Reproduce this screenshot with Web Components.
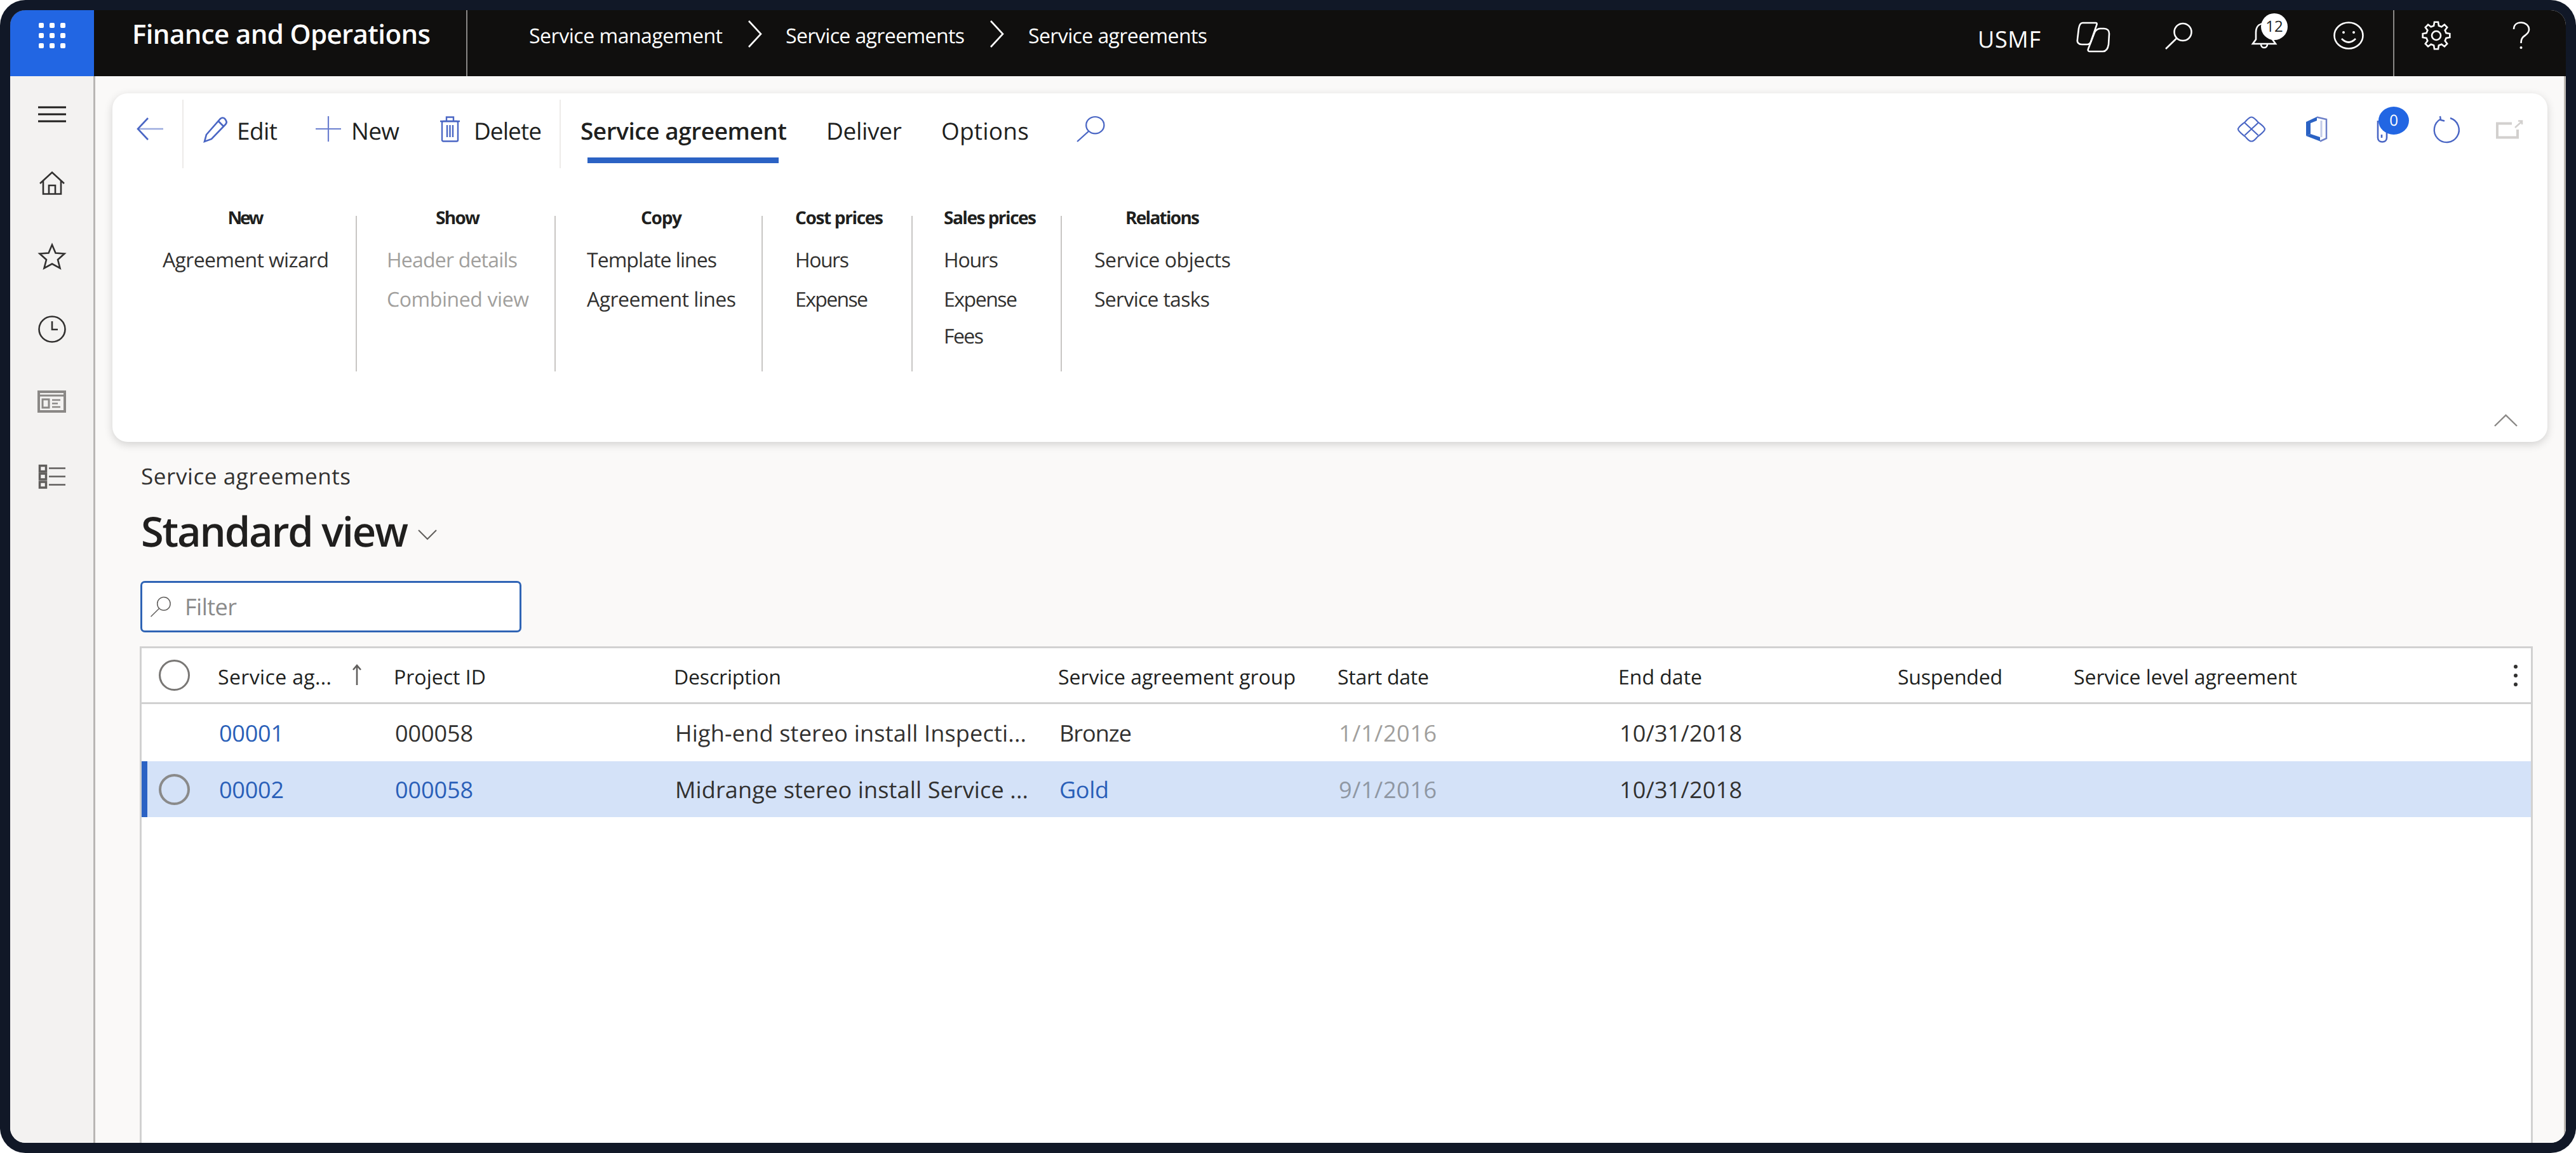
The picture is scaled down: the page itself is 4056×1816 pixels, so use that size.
<!DOCTYPE html>
<html lang="en"><head><meta charset="utf-8"><title>Service agreements</title>
<style>
html,body{margin:0;padding:0;background:#fff}
body{width:4056px;height:1816px;overflow:hidden;font-family:"Open Sans","Noto Sans",sans-serif;text-rendering:geometricPrecision;color:#201f1e}
</style></head>
<body>
<app-frame>
  <top-bar slot="top"></top-bar>
  <side-nav slot="side"></side-nav>
  <main-area slot="main">
    <action-pane></action-pane>
    <page-heading></page-heading>
    <filter-box></filter-box>
    <data-grid>
      <grid-row head>
        <grid-cell><ui-radio></ui-radio></grid-cell>
        <grid-cell head><fit-text w="179">Service ag...</fit-text><ui-icon name="sortup" w="14" h="33" style="margin:-7px 0 0 33px;color:#605e5c"></ui-icon></grid-cell>
        <grid-cell head><fit-text w="145">Project ID</fit-text></grid-cell>
        <grid-cell head><fit-text w="169">Description</fit-text></grid-cell>
        <grid-cell head><fit-text w="374">Service agreement group</fit-text></grid-cell>
        <grid-cell head><fit-text w="144">Start date</fit-text></grid-cell>
        <grid-cell head><fit-text w="132">End date</fit-text></grid-cell>
        <grid-cell head><fit-text w="165">Suspended</fit-text></grid-cell>
        <grid-cell head><fit-text w="352">Service level agreement</fit-text><ui-icon name="more" w="8" h="36" style="margin:-4px 0 0 340px;color:#323130"></ui-icon></grid-cell>
      </grid-row>
      <grid-row style="height:90px">
        <grid-cell></grid-cell>
        <grid-cell link><fit-text w="102">00001</fit-text></grid-cell>
        <grid-cell><fit-text w="123">000058</fit-text></grid-cell>
        <grid-cell><fit-text w="553">High-end stereo install Inspecti...</fit-text></grid-cell>
        <grid-cell><fit-text w="114">Bronze</fit-text></grid-cell>
        <grid-cell dim><fit-text w="154">1/1/2016</fit-text></grid-cell>
        <grid-cell><fit-text w="193">10/31/2018</fit-text></grid-cell>
        <grid-cell></grid-cell><grid-cell></grid-cell>
      </grid-row>
      <grid-row selected style="height:88px">
        <grid-cell><ui-radio thick></ui-radio></grid-cell>
        <grid-cell link><fit-text w="102">00002</fit-text></grid-cell>
        <grid-cell link><fit-text w="123">000058</fit-text></grid-cell>
        <grid-cell><fit-text w="556">Midrange stereo install Service ...</fit-text></grid-cell>
        <grid-cell link><fit-text w="78">Gold</fit-text></grid-cell>
        <grid-cell dim><fit-text w="154">9/1/2016</fit-text></grid-cell>
        <grid-cell><fit-text w="193">10/31/2018</fit-text></grid-cell>
        <grid-cell></grid-cell><grid-cell></grid-cell>
      </grid-row>
    </data-grid>
  </main-area>
</app-frame>
<script>
const gear=(()=>{const cx=23,cy=22,N=8,R=21.5,r=16;let d='';for(let i=0;i<N;i++){const a=i*2*Math.PI/N-Math.PI/2,s=Math.PI/N;
 const pts=[[r,a-s*.62],[R,a-s*.36],[R,a+s*.36],[r,a+s*.62]];
 pts.forEach((p,j)=>{d+=(i===0&&j===0?'M':'L')+(cx+p[0]*Math.cos(p[1])).toFixed(1)+' '+(cy+p[0]*Math.sin(p[1])).toFixed(1)+' '});}
 return d+'Z';})();
const ICONS={
 waffle:[42,40,[0,1,2].map(r=>[0,1,2].map(c=>`<rect x="${c*17}" y="${r*16}" width="8" height="8" rx="2" fill="currentColor" stroke="none"/>`).join('')).join('')],
 copilot:[53,50,'<path d="M10 3H31C33 3 33 5 32 7L23 33C22 36 20 37 17 37H9C4 37 1 34 2 29L4 12C5 6 7 3 10 3Z"/><path d="M38 12H44C49 12 52 15 52 20L51 37C50 43 47 48 42 48H21C19 48 18 46 19 44L29 18C30 15 34 12 38 12Z"/>'],
 search:[45,43,'<circle cx="29" cy="15.500" r="13.500"/><path d="M19.500 25L2 42"/>'],
 bell:[42,42,'<path d="M21 2C12 2 8 8 8 16V27L3 34H39L34 27V16C34 8 30 2 21 2Z"/><path d="M16 35A5 5 0 0 0 26 35"/>'],
 smile:[48,44,'<ellipse cx="24" cy="22" rx="22.500" ry="20.500"/><circle cx="16" cy="17" r="2" fill="currentColor" stroke="none"/><circle cx="32" cy="17" r="2" fill="currentColor" stroke="none"/><path d="M13 27Q24 38 35 27"/>'],
 gear:[46,44,`<path d="${gear}"/><circle cx="23" cy="22" r="7"/>`],
 help:[29,44,'<path d="M3 12C3 5 8 1.500 14.500 1.500C21 1.500 27 6 27 12.500C27 19 21 21 17.500 24.500C15 27 14.500 29 14.500 34"/><circle cx="14.500" cy="41" r="2" fill="currentColor" stroke="none"/>'],
 crumb:[23,43,'<path d="M2 1L21 21.500L2 42"/>'],
 burger:[44,26,'<path d="M0 2H44M0 13H44M0 24H44"/>'],
 home:[40,37,'<path d="M1 19L20 1.500L39 19"/><path d="M6 15V35.500H34V15"/><path d="M15 35.500V22H25V35.500"/>'],
 star:[42,41,'<path d="M21 2.500L26.500 15.500L40.500 16.500L30 26L33.500 39.500L21 32.500L8.500 39.500L12 26L1.500 16.500L15.500 15.500Z"/>'],
 clock:[44,43,'<ellipse cx="22" cy="21.500" rx="20.500" ry="20"/><path d="M22 9V22H31"/>'],
 workspace:[45,35,'<rect x="2" y="2" width="41" height="31" stroke-width="4"/><path d="M2 8H43" stroke-width="3"/><rect x="8" y="14" width="10" height="13" stroke-width="3"/><path d="M23 15H36M23 20.500H32M23 26H36" stroke-width="2.500"/>'],
 tasklist:[42,37,'<rect x="1.500" y="1.500" width="10" height="9" stroke-width="3.500"/><rect x="1.500" y="14" width="10" height="9" stroke-width="3.500"/><rect x="1.500" y="27" width="10" height="9" stroke-width="3.500"/><path d="M16 5.500H42M16 18.500H42M16 31.500H42"/>'],
 back:[43,36,'<path d="M18 1L2 18L18 35"/><path d="M2 18H42" opacity=".55"/>'],
 edit:[43,42,'<path d="M8 30L30 5C32 3 35 3 37 5L39 8C40 10 40 12 38 14L16 37L5 41Z"/><path d="M27 9L35 17"/>'],
 plus:[42,42,'<path d="M21 1V41M1 21H41"/>'],
 trash:[33,42,'<rect x="4" y="9" width="25" height="31.500" rx="2"/><path d="M1 9H32M11 9V2.500H22V9M12 15V34M16.500 15V34M21 15V34"/>'],
 diamond:[44,41,'<path d="M22 1.500C26 1.500 28 5 32 9C38 14 43 17 43 20.500C43 24 38 27 32 32C28 36 26 39.500 22 39.500C18 39.500 16 36 12 32C6 27 1 24 1 20.500C1 17 6 14 12 9C16 5 18 1.500 22 1.500Z"/><path d="M11.500 10.500L32.500 30M32.500 10.500L11.500 30"/>'],
 office:[35,40,'<path fill="currentColor" stroke="none" d="M1 9L18 1V7L8 11V28L1 31Z"/><path fill="currentColor" stroke="none" d="M1 31L8 28L23 33V39.500Z"/><path d="M18 1.500L33 5V35L23 39.500" stroke="#6d80c8" stroke-width="2.500"/><path d="M25 7V33" stroke="#c3cbe8" stroke-width="3"/>'],
 clip:[18,43,'<path d="M2 8V35C2 39 5 41.500 9 41.500C13 41.500 16 39 16 35V20"/><path d="M8 30V35"/>'],
 refresh:[42,41,'<path d="M27 3A19.500 19.500 0 1 1 12 4.500"/><path d="M11 0L12 6L18 7.500"/>'],
 popout:[42,31,'<path d="M25 6.500H2V28.500H34V16" stroke-width="4"/><path d="M30 13L40 4M35 2.500H41V8" stroke-width="2.500"/>'],
 chevdown:[30,16,'<path d="M1 1L15 15L29 1"/>'],
 chevup:[37,19,'<path d="M1 18L18.500 1L36 18"/>'],
 sortup:[14,33,'<path d="M7 33V2M1 9L7 2L13 9"/>'],
 more:[8,36,'<circle cx="4" cy="4" r="3" fill="currentColor" stroke="none"/><circle cx="4" cy="18" r="3" fill="currentColor" stroke="none"/><circle cx="4" cy="32" r="3" fill="currentColor" stroke="none"/>']
};
class UiIcon extends HTMLElement{constructor(){super();this.attachShadow({mode:'open'})}
 connectedCallback(){const [vw,vh,body]=ICONS[this.getAttribute('name')];const w=this.getAttribute('w')||vw,h=this.getAttribute('h')||vh,sw=this.getAttribute('sw')||2.6;
  this.shadowRoot.innerHTML=`<style>:host{display:inline-flex;flex:none;width:${w}px;height:${h}px;line-height:0}svg{width:100%;height:100%;overflow:visible;fill:none;stroke:currentColor;stroke-width:${sw}}</style><svg viewBox="0 0 ${vw} ${vh}" preserveAspectRatio="none" aria-hidden="true">${body}</svg>`;}}
class FitText extends HTMLElement{constructor(){super();this.attachShadow({mode:'open'}).innerHTML='<style>:host{display:inline-block;flex:none;white-space:nowrap}</style><slot></slot>'}
 fit(){const w=+this.getAttribute('w');if(!w)return;this.style.letterSpacing='0';const m=this.getBoundingClientRect().width,n=this.textContent.length;if(!m||n<2)return;const ls=(w-m)/(n-1);this.style.letterSpacing=ls.toFixed(3)+'px';this.style.marginRight=(-ls).toFixed(3)+'px';}}
class AppFrame extends HTMLElement{constructor(){super();this.attachShadow({mode:'open'}).innerHTML=`<style>
 :host{display:block;width:4056px;height:1816px;box-sizing:border-box;padding:16px;background:#111827;border-radius:40px}
 .app{display:grid;grid-template-columns:134px 1fr;grid-template-rows:104px 1fr;height:1784px;border-radius:24px;overflow:hidden;background:#faf9f8}
 .t{grid-column:1/3;display:flex}.s{display:flex}.m{display:flex;min-width:0;min-height:0}
 ::slotted(*){flex:1;min-width:0}
 </style><div class="app"><div class="t"><slot name="top"></slot></div><div class="s"><slot name="side"></slot></div><div class="m"><slot name="main"></slot></div></div>`}}
class TopBar extends HTMLElement{constructor(){super();this.attachShadow({mode:'open'}).innerHTML=`<style>
 :host{display:flex;align-items:stretch;height:104px;background:#100f0e;color:#fff;font-size:32px}
 .waffle{box-sizing:border-box;width:132px;padding-bottom:24px;background:#2266e3;display:flex;align-items:center;justify-content:center;flex:none}
 .title{display:flex;align-items:center;box-sizing:border-box;padding-bottom:30px;font-size:42px;font-weight:600;margin-left:60px;width:526px;flex:none}
 .rule{width:2px;height:104px;background:#8a8886;flex:none}
 .crumbs{display:flex;align-items:center;box-sizing:border-box;padding-bottom:24px;margin-left:97px}
 .crumbs ui-icon{margin-bottom:5px}
 .right{margin-left:auto;display:flex;align-items:center;box-sizing:border-box;padding:0 56px 24px 0}
 .right .rule{align-self:flex-start}
 .usmf{font-size:36px;margin-top:10px}
 .bell{position:relative;width:57px;height:42px;flex:none}
 .badge{position:absolute;left:16px;top:-14px;width:42px;height:42px;border-radius:50%;background:#fff;color:#201f1e;font-size:24px;line-height:42px;text-align:center}
 ui-icon{color:#fff}
 </style>
 <div class="waffle"><ui-icon name="waffle"></ui-icon></div>
 <div class="title"><fit-text w="470">Finance and Operations</fit-text></div>
 <div class="rule"></div>
 <nav class="crumbs">
  <fit-text w="305">Service management</fit-text><ui-icon name="crumb" style="margin-left:39px"></ui-icon>
  <fit-text w="282" style="margin-left:37px">Service agreements</fit-text><ui-icon name="crumb" style="margin-left:39px"></ui-icon>
  <fit-text w="282" style="margin-left:38px">Service agreements</fit-text>
 </nav>
 <div class="right">
  <fit-text class="usmf" w="99">USMF</fit-text>
  <ui-icon name="copilot" style="margin-left:56px;margin-top:4px"></ui-icon>
  <ui-icon name="search" style="margin-left:86px"></ui-icon>
  <div class="bell" style="margin-left:91px"><ui-icon name="bell"></ui-icon><div class="badge">12</div></div>
  <ui-icon name="smile" style="margin-left:73px"></ui-icon>
  <div class="rule" style="margin-left:46px"></div>
  <ui-icon name="gear" style="margin-left:43px"></ui-icon>
  <ui-icon name="help" style="margin-left:96px"></ui-icon>
 </div>`}}
class SideNav extends HTMLElement{constructor(){super();this.attachShadow({mode:'open'}).innerHTML=`<style>
 :host{display:flex;flex-direction:column;align-items:center;box-sizing:border-box;width:134px;padding:47px 0 0 0;background:#f3f2f1;border-right:3px solid #b8b6b4;color:#323130}
 </style>
 <ui-icon name="burger" sw="3" style="color:#201f1e"></ui-icon>
 <ui-icon name="home" style="margin-top:77px"></ui-icon>
 <ui-icon name="star" style="margin-top:76px"></ui-icon>
 <ui-icon name="clock" style="margin-top:73px"></ui-icon>
 <ui-icon name="workspace" sw="3" style="margin-top:75px;color:#8a8886"></ui-icon>
 <ui-icon name="tasklist" style="margin-top:82px;color:#605e5c"></ui-icon>`}}
class MainArea extends HTMLElement{constructor(){super();this.attachShadow({mode:'open'}).innerHTML=`<style>
 :host{display:flex;flex-direction:column;box-sizing:border-box;padding:27px 0 0 27px;background:#faf9f8;border-right:3px solid #bdb8b3;height:1680px;overflow:hidden}
 </style><slot></slot>`}}
class RbGroup extends HTMLElement{constructor(){super();this.attachShadow({mode:'open'}).innerHTML=`<style>
 :host{display:block;flex:none;box-sizing:border-box;height:245px;border-right:2px solid #c8c6c4}
 :host([last]){border-right:0}
 .col{width:fit-content;margin-top:-14px}
 .lab{font-size:28px;font-weight:700;line-height:34px;text-align:center;color:#201f1e;margin-bottom:20px}
 </style><div class="col"><div class="lab"><fit-text></fit-text></div><slot></slot></div>`}
 connectedCallback(){const f=this.shadowRoot.querySelector('.lab fit-text');f.textContent=this.getAttribute('label');f.setAttribute('w',this.getAttribute('lw'))}}
class RbItem extends HTMLElement{constructor(){super();this.attachShadow({mode:'open'}).innerHTML=`<style>
 :host{display:block;height:60px;line-height:60px;font-size:32px;color:#323130;white-space:nowrap}
 :host([disabled]){color:#a19f9d}
 </style><slot></slot>`}}
class ActionPane extends HTMLElement{constructor(){super();this.attachShadow({mode:'open'}).innerHTML=`<style>
 :host{display:flex;flex-direction:column;flex:none;box-sizing:border-box;width:3834px;height:549px;background:#fff;border-radius:24px;box-shadow:0 4px 14px rgba(0,0,0,.16)}
 .top{display:flex;align-items:center;box-sizing:border-box;height:110px;padding:6px 39px 0 38px;font-size:37px;color:#201f1e}
 .top ui-icon{margin-bottom:4px}
 .sep{align-self:flex-start;margin-top:4px;width:2px;height:108px;background:#edebe9;flex:none}
 .tab{align-self:stretch;display:flex;align-items:center;position:relative;flex:none}
 .tab.on{font-weight:600}
 .tab.on i{position:absolute;left:11px;right:13px;bottom:0;height:9px;background:#2b62c4}
 .right{margin-left:auto;display:flex;align-items:center;color:#4a66c4}
 .clip{position:relative;width:53px;height:43px;flex:none;margin-bottom:4px}
 .badge{position:absolute;left:3px;top:-14px;width:48px;height:44px;border-radius:50%;background:#2266e3;color:#fff;font-size:24px;line-height:44px;text-align:center}
 .groups{display:flex;margin-top:83px}
 .foot{margin-top:auto;display:flex;justify-content:flex-end;padding:0 47px 24px 0;color:#8a8886}
 .ic{color:#4a66c4}
 </style>
 <div class="top">
  <ui-icon class="ic" name="back"></ui-icon>
  <div class="sep" style="margin-left:29px"></div>
  <ui-icon class="ic" name="edit" style="margin-left:28px"></ui-icon><fit-text w="64" style="margin-left:13px">Edit</fit-text>
  <ui-icon class="ic" name="plus" sw="2.2" style="margin-left:59px;color:#6b7fcf"></ui-icon><fit-text w="76" style="margin-left:15px">New</fit-text>
  <ui-icon class="ic" name="trash" sw="2.4" style="margin-left:63px"></ui-icon><fit-text w="107" style="margin-left:21px">Delete</fit-text>
  <div class="sep" style="margin-left:28px"></div>
  <div class="tab on" style="margin-left:31px"><fit-text w="325">Service agreement</fit-text><i></i></div>
  <div class="tab" style="margin-left:62px;font-weight:500"><fit-text w="119">Deliver</fit-text></div>
  <div class="tab" style="margin-left:62px;font-weight:500"><fit-text w="138">Options</fit-text></div>
  <ui-icon class="ic" name="search" w="47" h="42" sw="2.2" style="margin-left:74px"></ui-icon>
  <div class="right">
   <ui-icon name="diamond" sw="2.2"></ui-icon>
   <ui-icon name="office" style="margin-left:63px;color:#2b62c4"></ui-icon>
   <div class="clip" style="margin-left:77px"><ui-icon name="clip"></ui-icon><div class="badge">0</div></div>
   <ui-icon name="refresh" sw="2.4" style="margin-left:36px"></ui-icon>
   <ui-icon name="popout" style="margin-left:57px;color:#d2d0ce"></ui-icon>
  </div>
 </div>
 <div class="groups">
  <rb-group label="New" lw="57" style="width:385px;padding-left:79px"><rb-item><fit-text w="262">Agreement wizard</fit-text></rb-item></rb-group>
  <rb-group label="Show" lw="70" style="width:313px;padding-left:47px"><rb-item disabled><fit-text w="206">Header details</fit-text></rb-item><rb-item disabled style="margin-top:2px"><fit-text w="224">Combined view</fit-text></rb-item></rb-group>
  <rb-group label="Copy" lw="65" style="width:326px;padding-left:49px"><rb-item><fit-text w="205">Template lines</fit-text></rb-item><rb-item style="margin-top:2px"><fit-text w="235">Agreement lines</fit-text></rb-item></rb-group>
  <rb-group label="Cost prices" lw="139" style="width:236px;padding-left:51px"><rb-item><fit-text w="85">Hours</fit-text></rb-item><rb-item style="margin-top:2px"><fit-text w="115">Expense</fit-text></rb-item></rb-group>
  <rb-group label="Sales prices" lw="146" style="width:235px;padding-left:49px"><rb-item><fit-text w="86">Hours</fit-text></rb-item><rb-item style="margin-top:2px"><fit-text w="116">Expense</fit-text></rb-item><rb-item style="margin-top:-2px"><fit-text w="63">Fees</fit-text></rb-item></rb-group>
  <rb-group last label="Relations" lw="117" style="width:300px;padding-left:51px"><rb-item><fit-text w="215">Service objects</fit-text></rb-item><rb-item style="margin-top:2px"><fit-text w="182">Service tasks</fit-text></rb-item></rb-group>
 </div>
 <div class="foot"><ui-icon name="chevup" sw="2.4"></ui-icon></div>`}}
class PageHeading extends HTMLElement{constructor(){super();this.attachShadow({mode:'open'}).innerHTML=`<style>
 :host{display:block;flex:none;margin:33px 0 0 45px}
 .cap{font-size:35px;line-height:44px;color:#323130}
 .view{display:flex;align-items:center;margin-top:24px;height:80px;font-size:65px;font-weight:600;color:#201f1e}
 </style>
 <div class="cap"><fit-text w="330">Service agreements</fit-text></div>
 <div class="view"><fit-text w="421">Standard view</fit-text><ui-icon name="chevdown" sw="2" style="margin:10px 0 0 15px;color:#605e5c"></ui-icon></div>`}}
class FilterBox extends HTMLElement{constructor(){super();this.attachShadow({mode:'open'}).innerHTML=`<style>
 :host{display:flex;align-items:center;flex:none;box-sizing:border-box;width:600px;height:81px;margin:38px 0 0 44px;padding-left:12px;background:#fff;border:3px solid #2f64b5;border-radius:7px;font-size:36px;color:#8a8a8a}
 </style><ui-icon name="search" w="34" h="33" sw="2" style="color:#605e5c"></ui-icon><fit-text w="82" style="margin-left:21px">Filter</fit-text>`}}
class DataGrid extends HTMLElement{constructor(){super();this.attachShadow({mode:'open'}).innerHTML=`<style>
 :host{display:block;flex:1;box-sizing:border-box;width:3768px;margin:22px 0 0 43px;background:#fff;border:solid #d1d1d1;border-width:3px 3px 0 3px;
 --cols:120px 277px 441px 605px 440px 442px 440px 277px 1fr}
 </style><slot></slot>`}}
class GridRow extends HTMLElement{constructor(){super();this.attachShadow({mode:'open'}).innerHTML=`<style>
 :host{display:grid;grid-template-columns:var(--cols);box-sizing:border-box}
 :host([head]){height:88px;border-bottom:3px solid #d1d1d1}
 :host([selected]){background:#d4e2f8;box-shadow:inset 9px 0 #2b62c4}
 </style><slot></slot>`}}
class GridCell extends HTMLElement{constructor(){super();this.attachShadow({mode:'open'}).innerHTML=`<style>
 :host{display:flex;align-items:center;padding-left:2px;font-size:36px;color:#323130;min-width:0;overflow:visible;white-space:nowrap}
 :host([head]){box-sizing:border-box;padding:5px 0 0 0;font-size:32px;font-weight:500;color:#201f1e}
 :host([link]){color:#2a5fb8}
 :host([dim]){color:#a19f9d}
 :host-context(grid-row[selected]):host([dim]){color:#8f97a3}
 </style><slot></slot>`}}
class UiRadio extends HTMLElement{constructor(){super();this.attachShadow({mode:'open'}).innerHTML=`<style>
 :host{display:block;box-sizing:border-box;width:49px;height:49px;margin-left:24.5px;border:3px solid #797775;border-radius:50%;flex:none}
 :host([thick]){border:4px solid #8a8a8a}
 </style>`}}
const defs={'ui-icon':UiIcon,'fit-text':FitText,'top-bar':TopBar,'side-nav':SideNav,'main-area':MainArea,'rb-group':RbGroup,'rb-item':RbItem,'action-pane':ActionPane,'page-heading':PageHeading,'filter-box':FilterBox,'data-grid':DataGrid,'grid-row':GridRow,'grid-cell':GridCell,'ui-radio':UiRadio,'app-frame':AppFrame};
Object.entries(defs).forEach(([k,v])=>customElements.define(k,v));
(function walk(root){root.querySelectorAll('*').forEach(el=>{if(el.localName==='fit-text')el.fit();if(el.shadowRoot)walk(el.shadowRoot)})})(document);
</script>
</body></html>
